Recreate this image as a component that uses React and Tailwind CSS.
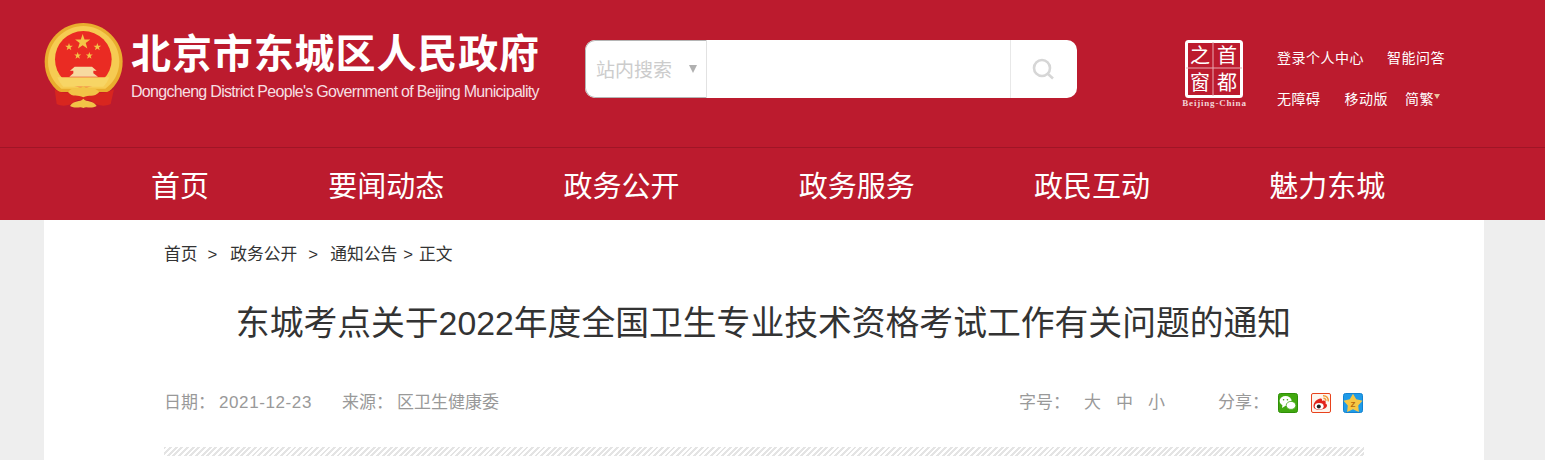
import React from "react";

const navItems = ["首页", "要闻动态", "政务公开", "政务服务", "政民互动", "魅力东城"];

// five point star, used by the emblem
const starPoints = (cx, cy, r, inner = 0.4) => {
    const pts = [];
    for (let i = 0; i < 10; i++) {
        const rad = i % 2 === 0 ? r : r * inner;
        const a = (Math.PI / 5) * i - Math.PI / 2;
        pts.push(`${cx + rad * Math.cos(a)},${cy + rad * Math.sin(a)}`);
    }
    return pts.join(" ");
};

const Emblem = () => (
    <svg viewBox="0 0 270 270" className="w-[90px] h-[90px] shrink-0">
        <path d="M130 9 C68 9 14 60 14 125 C14 165 32 196 58 216 L204 216 C230 196 248 165 248 125 C248 60 192 9 130 9 Z" fill="#e9ad2e" />
        <path d="M130 18 C75 18 24 64 24 125 C24 160 42 188 64 206 L196 206 C220 188 238 160 238 125 C238 64 185 18 130 18 Z" fill="#f6cb52" />
        <circle cx="130" cy="118" r="85" fill="#ea2b23" />
        <polygon points={starPoints(128, 66, 24)} fill="#f4c447" />
        <polygon points={starPoints(87, 81, 12)} fill="#f4c447" />
        <polygon points={starPoints(172, 81, 12)} fill="#f4c447" />
        <polygon points={starPoints(113, 107, 11)} fill="#f4c447" />
        <polygon points={starPoints(148, 107, 11)} fill="#f4c447" />
        <path d="M104 140 L156 140 L170 152 L160 152 L160 160 L174 170 L88 170 L100 160 L100 152 L90 152 Z" fill="#f7d9a0" />
        <path d="M52 172 L208 172 C204 182 198 192 190 200 L70 200 C62 192 56 182 52 172 Z" fill="#f7d565" />
        <path d="M44 208 C70 226 100 216 130 202 C160 216 190 226 222 208 L212 252 C190 262 168 256 150 240 L112 240 C94 256 70 262 50 252 Z" fill="#d8261f" />
        <path d="M84 216 C100 196 116 210 130 198 C144 210 160 196 178 216 C162 234 146 222 130 232 C114 222 98 234 84 216 Z" fill="#f2c347" />
        <path d="M90 258 C102 238 120 248 130 236 C140 248 158 238 170 258 C152 268 140 258 130 264 C120 258 108 268 90 258 Z" fill="#f2c347" />
    </svg>
);

const Seal = () => (
    <svg viewBox="0 0 66 68" className="w-[66px] h-[68px] shrink-0 overflow-visible">
        <rect x="4.5" y="1.5" width="55" height="55" rx="2" fill="none" stroke="#fff" strokeWidth="3" />
        <path d="M31 2 V56 M4 28 H60" stroke="#e9aab2" strokeWidth="1" />
        <text x="18" y="23" textAnchor="middle" fill="#fff" fontSize="20" fontFamily="'Noto Sans CJK SC'">之</text>
        <text x="45" y="23" textAnchor="middle" fill="#fff" fontSize="20" fontFamily="'Noto Sans CJK SC'">首</text>
        <text x="18" y="50" textAnchor="middle" fill="#fff" fontSize="20" fontFamily="'Noto Sans CJK SC'">窗</text>
        <text x="45" y="50" textAnchor="middle" fill="#fff" fontSize="20" fontFamily="'Noto Sans CJK SC'">都</text>
        <text x="32.5" y="66" textAnchor="middle" fill="#f3d3d7" fontSize="9" fontWeight="700" letterSpacing="0.8" fontFamily="'Liberation Serif'">Beijing-China</text>
    </svg>
);

const WechatIcon = () => (
    <svg viewBox="0 0 20 20" className="w-5 h-5">
        <rect x="0.5" y="0.5" width="19" height="19" rx="2" fill="#41a80f" stroke="#2f8f08" />
        <ellipse cx="7.6" cy="8" rx="6" ry="5" fill="#fff" />
        <path d="M4.5 11.5 L4 15 L8 12.5 Z" fill="#fff" />
        <ellipse cx="13" cy="12.4" rx="4.8" ry="4" fill="#fff" stroke="#41a80f" strokeWidth="0.8" />
        <circle cx="5.6" cy="6.8" r="0.8" fill="#41a80f" />
        <circle cx="9.4" cy="6.8" r="0.8" fill="#41a80f" />
    </svg>
);

const WeiboIcon = () => (
    <svg viewBox="0 0 20 20" className="w-5 h-5">
        <rect x="0.5" y="0.5" width="19" height="19" rx="1.5" fill="#fdf5ee" stroke="#e8421c" />
        <path d="M2.5 13 C2.5 9 7 5 10 5.5 C11.5 6 11 8 11 8 C13.5 7 15.5 8 14.5 10.5 C16 11 16.5 12.5 15.5 14 C13.5 17 5 18 3 15 C2.6 14.4 2.5 13.7 2.5 13 Z" fill="#e2241b" />
        <ellipse cx="8.2" cy="13.2" rx="4.4" ry="3.2" fill="#fff" />
        <circle cx="7.8" cy="13.4" r="2" fill="#222" />
        <path d="M12 2.8 C15.5 2.6 17.6 5 17.2 8.4 M12.4 5.4 C14 5.2 15 6.2 14.8 7.8" fill="none" stroke="#f19a38" strokeWidth="1.5" />
    </svg>
);

const QzoneIcon = () => (
    <svg viewBox="0 0 20 20" className="w-5 h-5">
        <rect x="0.5" y="0.5" width="19" height="19" rx="2" fill="#1f9be8" stroke="#1482d0" />
        <polygon points={starPoints(10, 10.8, 10, 0.55)} fill="#f7c744" />
        <text x="10" y="14.2" textAnchor="middle" fontSize="8" fontWeight="700" fill="#b8690f" fontFamily="'Liberation Sans'">Z</text>
    </svg>
);

const App = () => {
    return (
        <div className="h-[460px] overflow-hidden bg-[#eeeeee] [font-family:'Liberation_Sans','Noto_Sans_CJK_SC',sans-serif]">
            <header className="h-[148px] bg-[#bc1b2e] border-b border-[#a01526] flex items-start">
                <div className="ml-[40px] mt-[20px]">
                    <Emblem />
                </div>
                <div className="ml-[1px] mt-[29px] w-[454px] text-white">
                    <div className="text-[40px] leading-[50px] font-bold tracking-[0.9px] whitespace-nowrap">北京市东城区人民政府</div>
                    <div className="text-[16px] leading-[20px] mt-[3px] text-[#f6dfe2] tracking-[-0.7px] whitespace-nowrap">Dongcheng District People's Government of Beijing Municipality</div>
                </div>
                <div className="mt-[40px] w-[492px] h-[58px] bg-white rounded-[10px] flex overflow-hidden">
                    <div className="w-[122px] h-full border border-[#b5b5b5] border-r-[#e2e2e2] rounded-l-[10px] flex items-center pl-[10px] text-[19px] text-[#cccccc]">
                        <span className="pt-[5px]">站内搜索</span>
                        <span className="ml-[17px] w-0 h-0 border-x-[4px] border-x-transparent border-t-[8px] border-t-[#b0b0b0]"></span>
                    </div>
                    <div className="flex-1"></div>
                    <div className="w-[67px] h-full border-l border-[#e8e8e8] flex items-center justify-center">
                        <svg viewBox="0 0 24 24" className="w-[24px] h-[24px] -ml-[2px]" fill="none" stroke="#d6d6d6" strokeWidth="2.6">
                            <circle cx="11" cy="11" r="8" />
                            <path d="M17 17 L22 21.5" />
                        </svg>
                    </div>
                </div>
                <div className="ml-[105px] mt-[40px]">
                    <Seal />
                </div>
                <div className="ml-[29px] mt-[47px] text-white text-[14px] tracking-[0.5px]">
                    <div className="flex h-[22px] items-center">
                        <span>登录个人中心</span>
                        <span className="ml-[23px]">智能问答</span>
                    </div>
                    <div className="flex h-[22px] items-center mt-[19px]">
                        <span>无障碍</span>
                        <span className="ml-[24px]">移动版</span>
                        <span className="ml-[17px]">简繁</span>
                        <span className="-mt-[6px] w-0 h-0 border-x-[3px] border-x-transparent border-t-[5px] border-t-[#e8c39a]"></span>
                    </div>
                </div>
            </header>

            <nav className="h-[72px] bg-[#bc1b2e] flex items-center gap-[119.25px] pl-[151px] pt-[7px] text-white text-[29px] whitespace-nowrap">
                {navItems.map((item) => (
                    <a key={item} href="#">{item}</a>
                ))}
            </nav>

            <main className="ml-[44px] w-[1440px] h-[240px] bg-white px-[120px]">
                <div className="pt-[23px] h-[66px] flex text-[16.75px] leading-[24px] text-[#333333] whitespace-nowrap">
                    <span>首页</span>
                    <span className="ml-[10px]">&gt;</span>
                    <span className="ml-[13px]">政务公开</span>
                    <span className="ml-[11px]">&gt;</span>
                    <span className="ml-[12px]">通知公告</span>
                    <span className="ml-[6px]">&gt;</span>
                    <span className="ml-[6px]">正文</span>
                </div>
                <h1 className="h-[70px] pr-[1px] text-center text-[33.8px] leading-[74px] font-normal text-[#333333] whitespace-nowrap">
                    东城考点关于2022年度全国卫生专业技术资格考试工作有关问题的通知
                </h1>
                <div className="mt-[32px] h-[30px] flex items-center text-[17px] text-[#999999] whitespace-nowrap">
                    <span>日期：</span>
                    <span className="ml-[4px] tracking-[0.6px]">2021-12-23</span>
                    <span className="ml-[30px]">来源：</span>
                    <span className="ml-[4px]">区卫生健康委</span>
                    <div className="ml-auto flex items-center">
                        <span className="-ml-[1px]">字号：</span>
                        <span className="ml-[14px]">大</span>
                        <span className="ml-[15px]">中</span>
                        <span className="ml-[15px]">小</span>
                        <span className="ml-[53px]">分享：</span>
                        <div className="ml-[9px] flex gap-[12.5px] mr-[1px]">
                            <WechatIcon />
                            <WeiboIcon />
                            <QzoneIcon />
                        </div>
                    </div>
                </div>
                <div className="mt-[29px] h-[9px] bg-[repeating-linear-gradient(135deg,#e4e4e4_0,#e4e4e4_2px,#ffffff_2px,#ffffff_4px)]"></div>
            </main>
        </div>
    );
};

export default App;
